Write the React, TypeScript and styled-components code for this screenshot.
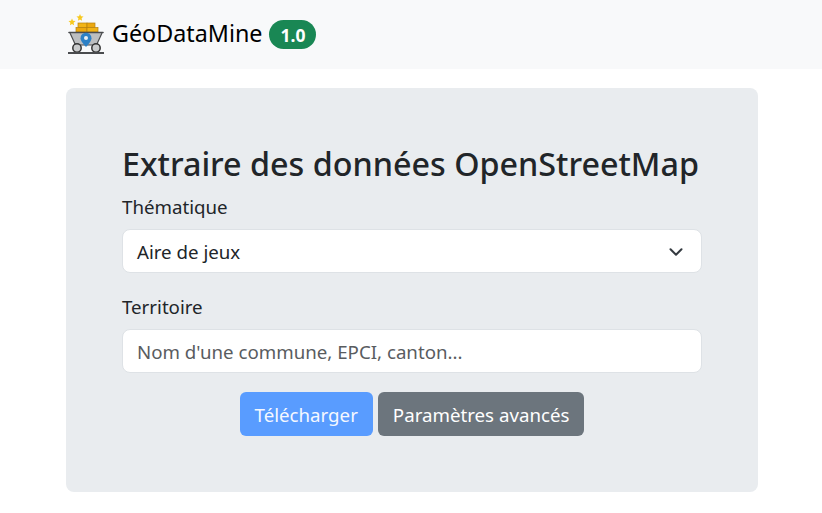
import React from "react";
import styled, { createGlobalStyle } from "styled-components";
import { ChevronDown } from "lucide-react";

const GlobalStyle = createGlobalStyle`
  * {
    box-sizing: border-box;
  }

  body {
    margin: 0;
    background: #fff;
    color: #212529;
    font-family: "Noto Sans", sans-serif;
    font-size: 18.7px;
    line-height: 24px;
  }
`;

const NavBar = styled.header`
  height: 69px;
  background: #f8f9fa;
  padding: 0 66px 0 67px;
  display: flex;
  align-items: center;
`;

const Brand = styled.div`
  display: flex;
  align-items: center;
  color: #000;
  font-size: 23.3px;
`;

const BrandName = styled.span`
  margin: -3px 0 0 7px;
`;

const VersionBadge = styled.span`
  margin-left: 7px;
  width: 47px;
  height: 29px;
  border-radius: 15px;
  background: #198754;
  color: #fff;
  font-size: 17.5px;
  font-weight: 700;
  display: flex;
  align-items: center;
  justify-content: center;
`;

const Main = styled.main`
  padding: 19px 64px 0 66px;
`;

const Card = styled.section`
  background: #e9ecef;
  border-radius: 8px;
  height: 404px;
  padding: 56px;
`;

const Title = styled.h1`
  margin: 0 0 13px;
  font-size: 32.3px;
  font-weight: 500;
  line-height: 38px;
  white-space: nowrap;
`;

const Field = styled.div`
  & + & {
    margin-top: 22px;
  }
`;

const Label = styled.label`
  display: block;
  margin-bottom: 10px;
`;

const Control = styled.div`
  height: 44px;
  background: #fff;
  border: 1px solid #dee2e6;
  border-radius: 8px;
  padding: 1px 14px 0;
  display: flex;
  align-items: center;
  justify-content: space-between;
`;

const Placeholder = styled.span`
  color: #595c5f;
`;

const Actions = styled.div`
  display: flex;
  justify-content: center;
  gap: 5px;
  margin-top: 19px;
`;

const Button = styled.button<{ $tone: string; $color: string }>`
  height: 44px;
  padding: 1px 15px 0;
  border: none;
  border-radius: 6px;
  background: ${({ $tone }) => $tone};
  color: ${({ $color }) => $color};
  font: inherit;
`;

const MineCart = () => (
  <svg width="38" height="41" viewBox="0 0 38 41">
    <path d="M5 4.500l1 2.300 2.500.3-1.900 1.700.5 2.500L5 10.100l-2.100 1.200.5-2.500L1.500 7.100 4 6.800z" fill="#f7c91f" />
    <path d="M13 0l1 2.300 2.500.3-1.900 1.700.5 2.500L13 5.600l-2.100 1.200.5-2.500-1.900-1.700 2.500-.3z" fill="#f7c91f" />
    <rect x="11" y="9" width="9" height="4.500" fill="#f2b416" stroke="#b5800f" strokeWidth=".7" />
    <rect x="20" y="9" width="8" height="4.500" fill="#eca80f" stroke="#b5800f" strokeWidth=".7" />
    <rect x="9" y="13.500" width="11" height="4.500" fill="#eca80f" stroke="#b5800f" strokeWidth=".7" />
    <rect x="20" y="13.500" width="11" height="4.500" fill="#f2b416" stroke="#b5800f" strokeWidth=".7" />
    <path d="M3 19h32l-5.500 12h-21z" fill="#bcbec0" />
    <path d="M2 18.500h34" stroke="#4a4c4e" strokeWidth="1.600" strokeLinecap="round" />
    <path d="M3 19l5.500 12h21L35 19" fill="none" stroke="#4a4c4e" strokeWidth="1.200" strokeLinejoin="round" />
    <path d="M19 33c-3.600-4.200-5.500-6.600-5.500-8.800a5.500 5.500 0 0 1 11 0c0 2.200-1.900 4.600-5.500 8.800z" fill="#2c80c5" />
    <circle cx="19" cy="24" r="2" fill="#e8eef3" />
    <circle cx="10" cy="34" r="4.200" fill="#c9cbcc" stroke="#333" strokeWidth="1.500" />
    <circle cx="29" cy="34" r="4.200" fill="#c9cbcc" stroke="#333" strokeWidth="1.500" />
    <rect x="1" y="38" width="36" height="2" fill="#4a4c4e" />
  </svg>
);

export default function App() {
  return (
    <>
      <GlobalStyle />
      <NavBar>
        <Brand>
          <MineCart />
          <BrandName>GéoDataMine</BrandName>
          <VersionBadge>1.0</VersionBadge>
        </Brand>
      </NavBar>
      <Main>
        <Card>
          <Title>Extraire des données OpenStreetMap</Title>
          <Field>
            <Label>Thématique</Label>
            <Control>
              Aire de jeux
              <ChevronDown size={22} color="#343a40" strokeWidth={2.2} />
            </Control>
          </Field>
          <Field>
            <Label>Territoire</Label>
            <Control>
              <Placeholder>Nom d'une commune, EPCI, canton...</Placeholder>
            </Control>
          </Field>
          <Actions>
            <Button $tone="#599cff" $color="#f5f8ff">Télécharger</Button>
            <Button $tone="#6c757d" $color="#fff">Paramètres avancés</Button>
          </Actions>
        </Card>
      </Main>
    </>
  );
}
